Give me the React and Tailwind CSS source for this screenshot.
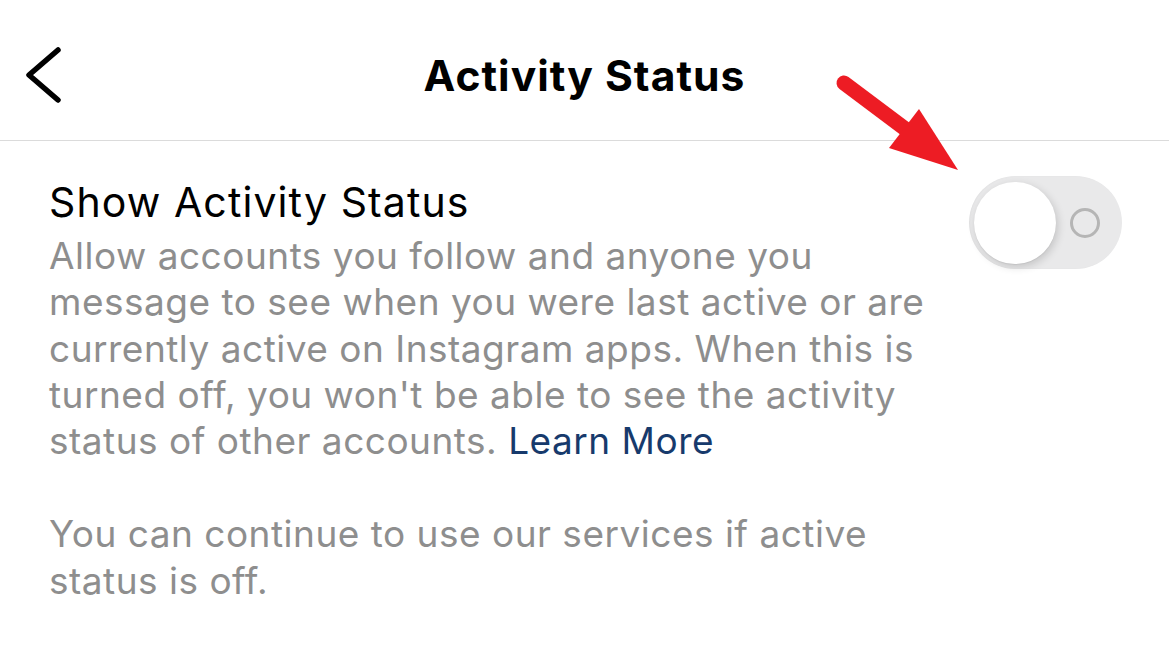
import React from "react";

// Back chevron for the navigation bar
function BackChevron() {
  return (
    <svg width="42" height="60" viewBox="0 0 42 60" className="block">
      <path
        d="M35 5 L6 30 L35 55"
        fill="none"
        stroke="#000"
        strokeWidth="5.5"
        strokeLinecap="round"
        strokeLinejoin="round"
      />
    </svg>
  );
}

// iOS-style switch in its "off" state
function Toggle() {
  return (
    <div className="flex items-center w-[153px] h-[93px] rounded-full bg-[#e9e9ea] pl-[5px] shrink-0 shadow-[inset_1px_0_2px_rgba(0,0,0,0.04)]">
      <div className="w-[82px] h-[82px] rounded-full bg-white shadow-[2px_3px_8px_rgba(0,0,0,0.16),0_1px_1px_rgba(0,0,0,0.05)]" />
      <div className="ml-[14px] w-[30px] h-[30px] rounded-full border-[3px] border-[#b5b5b5]" />
    </div>
  );
}

// Red annotation arrow pointing at the switch
function Arrow() {
  return (
    <svg
      className="absolute left-[830px] top-[70px] pointer-events-none"
      width="140"
      height="110"
      viewBox="830 70 140 110"
    >
      <line x1="844" y1="83" x2="912" y2="134" stroke="#ed1c24" strokeWidth="15" strokeLinecap="round" />
      <polygon points="958,170 919,109 889,148" fill="#ed1c24" />
    </svg>
  );
}

export default function App() {
  return (
    <div
      className="relative w-[1169px] h-[672px] bg-white overflow-hidden"
      style={{ fontFamily: "Inter, 'Noto Sans', sans-serif" }}
    >
      <header className="h-[141px] border-b border-[#dbdbdb] grid grid-cols-[1fr_auto_1fr] items-center pt-[11px]">
        <div className="pl-[23px] -mt-[2px]">
          <BackChevron />
        </div>
        <h1 className="text-[42.6px] leading-[52px] font-bold text-black tracking-[1px]">
          Activity Status
        </h1>
        <div />
      </header>

      <main className="flex items-start justify-between pl-[49px] pr-[47px] pt-[36px]">
        <div className="flex flex-col">
          <div className="text-[41px] leading-[50px] text-black tracking-[1.1px] mb-[6px]">
            Show Activity Status
          </div>
          <p className="text-[37px] leading-[46.3px] text-[#8e8e8e] tracking-[0.5px] whitespace-nowrap">
            Allow accounts you follow and anyone you
            <br />
            message to see when you were last active or are
            <br />
            currently active on Instagram apps. When this is
            <br />
            turned off, you won't be able to see the activity
            <br />
            status of other accounts.{" "}
            <span className="text-[#173a6c]">Learn More</span>
          </p>
          <p className="mt-[47px] text-[37px] leading-[46.3px] text-[#8e8e8e] tracking-[0.5px] whitespace-nowrap">
            You can continue to use our services if active
            <br />
            status is off.
          </p>
        </div>
        <div className="-mt-[1px]">
          <Toggle />
        </div>
      </main>

      <Arrow />
    </div>
  );
}
